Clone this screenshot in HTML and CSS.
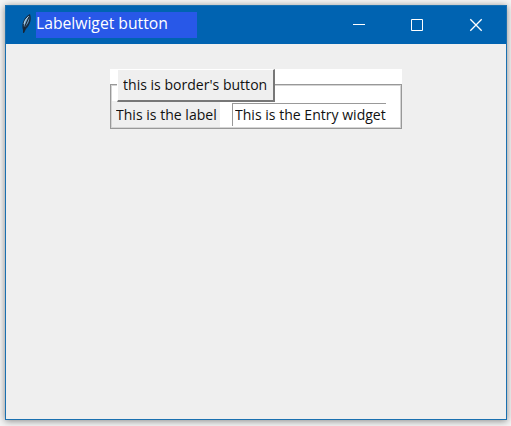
FILE: index.html
```
<!DOCTYPE html>
<html lang="en">
<head>
<meta charset="utf-8">
<title>Labelwiget button</title>
<link rel="stylesheet" href="styles.css">
</head>
<body>
<main class="window">
  <header class="titlebar">
    <svg class="feather" width="14" height="22" viewBox="0 0 14 22">
      <path d="M3 17C1 11 4 4 10 1C12 6 10 12 6 16L4 20L3 20Z" fill="#142b42"/>
      <path d="M4 14C3 10 6 5 9 3C10 7 8 11 5 14Z" fill="#76a9cf"/>
      <path d="M9 4L5 13L3.5 19" fill="none" stroke="#1b2430" stroke-width="1.1"/>
      <path d="M8.5 3.5C6 5.500 4.500 8 4 11" fill="none" stroke="#b9d9ee" stroke-width="1"/>
    </svg>
    <h1 class="title"><span>Labelwiget button</span></h1>
    <svg class="controls" width="131" height="14" viewBox="0 0 131 14" fill="none" stroke="#fff">
      <path d="M0 6.500H12M58.500 1.500H69.500V12.500H58.500Z"/>
      <path d="M117.300 1.300L128.700 12.700M128.700 1.300L117.300 12.700" stroke-width="1.300"/>
    </svg>
  </header>
  <section class="content">
    <div class="group">
      <div class="frame">
        <div class="label"><span>This is the label</span></div>
        <div class="entry"><span>This is the Entry widget</span></div>
      </div>
      <button class="button"><span>this is border's button</span></button>
    </div>
  </section>
</main>
</body>
</html>
```

FILE: styles.css
```
* { box-sizing: border-box; }
body {
  margin: 0;
  width: 511px;
  height: 426px;
  padding: 5px;
  overflow: hidden;
  background: #f4f4f4;
  font-family: "Open Sans", "Noto Sans", sans-serif;
}
.window {
  width: 502px;
  height: 415px;
  border: 1px solid #1a70b0;
  background: #efefef;
  box-shadow: 0 1px 7px rgba(0, 0, 0, .45);
}
.titlebar {
  display: flex;
  height: 38px;
  background: #0063b1;
}
.feather { margin: 7px 2px 0 14px; }
.title {
  width: 161px;
  height: 26px;
  margin: 6px 0 0;
  background: #2858e8;
  color: #fff;
  font-size: 16px;
  line-height: 23px;
  font-weight: 400;
  white-space: nowrap;
}
.title span, .label span, .entry span, .button span {
  display: inline-block;
  transform-origin: 0 50%;
}
.title span { transform: scaleX(.98); }
.label span, .entry span, .button span { transform: scaleX(.937); }
.controls { margin: 12px 0 0 156px; }
.content { padding: 25px 0 0 104px; }
.group {
  position: relative;
  width: 292px;
  height: 60px;
  padding-top: 15px;
  background: #fff;
}
.frame {
  display: flex;
  height: 45px;
  padding-top: 16px;
  border: 1px solid #989898;
  box-shadow: inset 0 0 0 1px #d4d4d4;
  font-size: 15px;
  line-height: 26px;
  color: #111;
  white-space: nowrap;
}
.label {
  width: 108px;
  height: 26px;
  margin-left: 1px;
  padding-left: 4px;
  background: #efefef;
}
.entry {
  width: 154px;
  height: 23px;
  margin: 2px 0 0 12px;
  padding-left: 2px;
  border-top: 1px solid #999;
  border-left: 1px solid #999;
  line-height: 20px;
}
.button {
  position: absolute;
  left: 7px;
  top: 0;
  width: 158px;
  height: 33px;
  padding: 0 0 2px 5px;
  border: 1px solid #fff;
  border-right: 2px solid #777;
  border-bottom: 2px solid #777;
  background: #efefef;
  color: #111;
  font: 15px/28px "Open Sans", "Noto Sans", sans-serif;
  text-align: left;
  white-space: nowrap;
}
```
